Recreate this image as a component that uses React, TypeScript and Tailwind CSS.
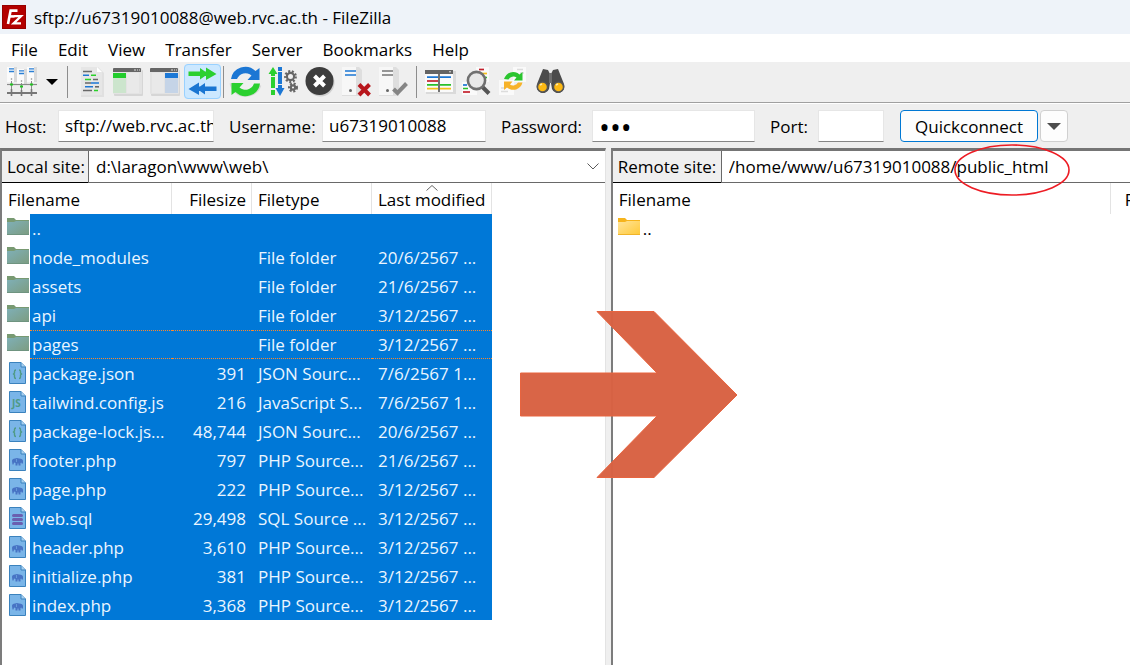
import type { ReactNode } from 'react'

type FileKind = 'folder' | 'json' | 'js' | 'php' | 'sql'

interface FileRow {
  name: string
  size: string
  type: string
  modified: string
  kind: FileKind
}

const menus = ['File', 'Edit', 'View', 'Transfer', 'Server', 'Bookmarks', 'Help']

const files: FileRow[] = [
  { name: '..', size: '', type: '', modified: '', kind: 'folder' },
  { name: 'node_modules', size: '', type: 'File folder', modified: '20/6/2567 ...', kind: 'folder' },
  { name: 'assets', size: '', type: 'File folder', modified: '21/6/2567 ...', kind: 'folder' },
  { name: 'api', size: '', type: 'File folder', modified: '3/12/2567 ...', kind: 'folder' },
  { name: 'pages', size: '', type: 'File folder', modified: '3/12/2567 ...', kind: 'folder' },
  { name: 'package.json', size: '391', type: 'JSON Sourc...', modified: '7/6/2567 1...', kind: 'json' },
  { name: 'tailwind.config.js', size: '216', type: 'JavaScript S...', modified: '7/6/2567 1...', kind: 'js' },
  { name: 'package-lock.js...', size: '48,744', type: 'JSON Sourc...', modified: '20/6/2567 ...', kind: 'json' },
  { name: 'footer.php', size: '797', type: 'PHP Source...', modified: '21/6/2567 ...', kind: 'php' },
  { name: 'page.php', size: '222', type: 'PHP Source...', modified: '3/12/2567 ...', kind: 'php' },
  { name: 'web.sql', size: '29,498', type: 'SQL Source ...', modified: '3/12/2567 ...', kind: 'sql' },
  { name: 'header.php', size: '3,610', type: 'PHP Source...', modified: '3/12/2567 ...', kind: 'php' },
  { name: 'initialize.php', size: '381', type: 'PHP Source...', modified: '3/12/2567 ...', kind: 'php' },
  { name: 'index.php', size: '3,368', type: 'PHP Source...', modified: '3/12/2567 ...', kind: 'php' },
]

const focusedFile = 'pages'

function Logo() {
  return (
    <svg width="24" height="24" viewBox="0 0 24 24" className="shrink-0">
      <rect width="24" height="24" fill="#b30000" />
      <rect x="0.5" y="0.5" width="23" height="23" fill="none" stroke="#7a0000" strokeDasharray="1 1" />
      <g fill="none" stroke="#fff" strokeWidth="2.6">
        <path d="M6 19 L8.6 5.6 H15.5" />
        <path d="M7 11.4 H12.5" />
        <path d="M12 11.2 H19 L11.6 18.4 H19" strokeWidth="2.3" />
      </g>
    </svg>
  )
}

function Icon({ children }: { children: ReactNode }) {
  return (
    <svg width="33" height="33" viewBox="0 0 33 33" className="shrink-0">
      {children}
    </svg>
  )
}

function SiteManagerIcon() {
  return (
    <Icon>
      {[1, 11, 21].map((x, i) => (
        <g key={x} transform={`translate(${x} ${i === 1 ? 4 : 2})`}>
          <rect width="8" height="15" fill="#fbfbfb" />
          <rect x="7" width="3" height="15" fill="#dadada" />
          <path d="M2 1.8 H7 M2 4.5 H7" stroke="#2b7fd4" strokeWidth="1.3" />
          <circle cx="4.5" cy="12" r="0.8" fill="#888" />
        </g>
      ))}
      <path d="M1 19.5 H31" stroke="#8a8a8a" strokeWidth="1.2" />
      <path d="M5.5 16 V24 M15.5 18 V26 M25.5 16 V24" stroke="#8a8a8a" />
      <path d="M4 19.5 H7 M14 21.5 H17 M24 19.5 H27" stroke="#22c322" strokeWidth="2.2" />
      <path d="M1 28 H31" stroke="#777" strokeWidth="2" />
      <path d="M5.5 24 V31 M15.5 25 V31 M25.5 24 V31" stroke="#777" strokeWidth="1.6" />
    </Icon>
  )
}

function LogIcon() {
  return (
    <Icon>
      <path d="M6 2 H23 L29 8 V32 H6 Z" fill="#e0e0e0" />
      <path d="M6 2 H22 L27 7 V30 H6 Z" fill="#e6e6e6" />
      <path d="M22 2 V7 H27 Z" fill="#fff" />
      <g strokeWidth="1.6">
        <path d="M8 6.5 H17 M18 14.5 H23 M10 18 H16 M8 25.5 H17" stroke="#686868" />
        <path d="M8 10.2 H14 M16 18 H24 M10 21.8 H18" stroke="#1c77d4" />
        <path d="M16 10.2 H21 M10 14.5 H16 M19 25.5 H23" stroke="#2ad12a" />
        <path d="M20 21.8 H24" stroke="#686868" />
      </g>
    </Icon>
  )
}

function LocalTreeIcon() {
  return (
    <Icon>
      <rect x="2" y="5" width="29" height="26" rx="1" fill="#d6d6d6" />
      <rect x="1" y="3" width="29" height="26" rx="1" fill="#e3e3e3" />
      <path d="M1 7 V4 Q1 3 2 3 H28 Q29 3 29 4 V7 Z" fill="#666" />
      <path d="M22 5 H24 M25 5 H26 M27 5 H28" stroke="#ddd" />
      <rect x="1" y="8" width="13" height="5" fill="#22cc2c" />
      <rect x="1" y="13" width="13" height="15" fill="#cce5cd" />
      <rect x="15" y="8" width="12" height="20" fill="#e9e9e9" />
    </Icon>
  )
}

function RemoteTreeIcon() {
  return (
    <Icon>
      <rect x="2" y="5" width="29" height="26" rx="1" fill="#d6d6d6" />
      <rect x="1" y="3" width="29" height="26" rx="1" fill="#e3e3e3" />
      <path d="M1 7 V4 Q1 3 2 3 H28 Q29 3 29 4 V7 Z" fill="#666" />
      <path d="M22 5 H24 M25 5 H26 M27 5 H28" stroke="#ddd" />
      <rect x="3" y="8" width="12" height="20" fill="#e9e9e9" />
      <rect x="16" y="8" width="13" height="5" fill="#1c78d6" />
      <rect x="16" y="13" width="13" height="15" fill="#c5d4e7" />
    </Icon>
  )
}

function QueueIcon() {
  return (
    <Icon>
      <path d="M2.5 6.5 H14 V3 L19 6.5 H20 V2.5 L30.5 9 L20 15 V11 H19 L14 14.5 V11 H2.5 Z" fill="#2bd02f" />
      <path d="M30.5 21.5 H19 V18 L14 21.5 H13 V17.5 L2.5 24 L13 30 V26 H14 L19 29.5 V26 H30.5 Z" fill="#1b76d2" />
    </Icon>
  )
}

function RefreshIcon() {
  return (
    <Icon>
      <path d="M3 18 A 14 14 0 0 0 30 20" fill="none" stroke="#d8d8d8" strokeWidth="5" />
      <path d="M2 14 A 14.5 14.5 0 0 1 26.5 6 L30.5 3 V15 H18.5 L22.5 10.5 A 9 9 0 0 0 8 14 Z" fill="#1c77d4" />
      <path d="M31 18.5 A 14.5 14.5 0 0 1 6.5 27 L2.5 30 V18 H14.5 L10.5 22.5 A 9 9 0 0 0 25 18.5 Z" fill="#2bd02f" />
    </Icon>
  )
}

function Gear({ x, y, r }: { x: number; y: number; r: number }) {
  return (
    <g transform={`translate(${x} ${y})`}>
      <circle r={r} fill="none" stroke="#666" strokeWidth="2.4" strokeDasharray="2 1.6" />
      <circle r={r - 1.6} fill="none" stroke="#666" strokeWidth="2.2" />
    </g>
  )
}

function FilterIcon() {
  return (
    <Icon>
      <path d="M5 30 V25 H9 V30 Z M5 23 V9 H2.5 L7 2 L11.5 9 H9 V23 Z" fill="#2bd02f" />
      <path d="M5 11.5 H9" stroke="#efefef" />
      <path d="M12 2 H16 V23 H18.5 L14 31 L9.5 23 H12 Z" fill="#1c77d4" />
      <path d="M12 6.5 H16 M12 19.5 H16" stroke="#efefef" />
      <Gear x={24.5} y={11.5} r={5.2} />
      <Gear x={27} y={22.5} r={3.8} />
    </Icon>
  )
}

function CancelIcon() {
  return (
    <Icon>
      <circle cx="17.5" cy="17.5" r="14" fill="#cfcfcf" />
      <circle cx="16.5" cy="16" r="14" fill="#3d3d3d" />
      <path d="M11.5 11 L21.5 21 M21.5 11 L11.5 21" stroke="#fff" strokeWidth="4" />
    </Icon>
  )
}

function Server({ color }: { color: string }) {
  return (
    <>
      <path d="M2 2 H19 L22 5 V31 H2 Z" fill="#dedede" />
      <rect x="2" y="2" width="14" height="28" fill="#f7f7f7" />
      <path d="M5 6 H16 M5 10 H16" stroke={color} strokeWidth="1.7" />
      <circle cx="10.5" cy="25.5" r="1.5" fill="#666" />
    </>
  )
}

function DisconnectIcon() {
  return (
    <Icon>
      <Server color="#1c77d4" />
      <path d="M19 19.5 L29.5 30 M29.5 19.5 L19 30" stroke="#b8161c" strokeWidth="4" />
    </Icon>
  )
}

function ReconnectIcon() {
  return (
    <Icon>
      <Server color="#777" />
      <path d="M16.5 24 L20.5 28 L29.5 18.5" fill="none" stroke="#858585" strokeWidth="4" />
    </Icon>
  )
}

function CompareIcon() {
  return (
    <Icon>
      <rect x="3" y="6" width="30" height="23" fill="#dadada" />
      <rect x="2" y="5" width="28" height="22" fill="#fafafa" />
      <rect x="2" y="5" width="28" height="4" fill="#646464" />
      <path d="M26 6.8 H28" stroke="#ddd" />
      <g strokeWidth="1.7">
        <path d="M4 12.2 H15 M17 12.2 H28" stroke="#1c77d4" />
        <path d="M4 16 H15" stroke="#c3202c" />
        <path d="M4 19.8 H15 M17 19.8 H28" stroke="#2ac02a" />
        <path d="M4 23.6 H15 M17 23.6 H28" stroke="#f5c01d" />
      </g>
      <path d="M16 8 V27" stroke="#646464" strokeWidth="1.8" />
    </Icon>
  )
}

function SearchIcon() {
  return (
    <Icon>
      <rect x="16" y="2" width="13" height="15" fill="#fafafa" />
      <rect x="2" y="17" width="15" height="13" fill="#fafafa" />
      <g strokeWidth="1.7">
        <path d="M19 4.5 H24" stroke="#c3202c" />
        <path d="M21 8.5 H27" stroke="#f5c01d" />
        <path d="M23 12.5 H27 M3 23.5 H8" stroke="#2ac02a" />
        <path d="M3 20 H7" stroke="#1c77d4" />
        <path d="M3 27 H10" stroke="#c3202c" />
      </g>
      <path d="M22 21.5 L29 28.5" stroke="#555" strokeWidth="4" />
      <circle cx="16.5" cy="15.5" r="8.6" fill="#e8e8e8" stroke="#707070" strokeWidth="2.6" />
    </Icon>
  )
}

function SyncIcon() {
  return (
    <Icon>
      <rect x="16" y="2" width="13" height="15" fill="#fafafa" />
      <rect x="2" y="15" width="15" height="15" fill="#fafafa" />
      <path d="M20 4.5 H26 M23 8 H27 M4 23 H9 M4 26.5 H11" stroke="#dcdcdc" strokeWidth="1.4" />
      <path d="M7 14 A 9.5 9.5 0 0 1 22.5 9.5 L25.5 7 V15.5 H17 L19.5 12.5 A 5.5 5.5 0 0 0 11.5 14.5 Z" fill="#2bc52f" />
      <path d="M25.5 17.5 A 9.5 9.5 0 0 1 10 22.5 L7 25 V16.5 H15.5 L13 19.5 A 5.5 5.5 0 0 0 21 17.5 Z" fill="#f7b32a" />
    </Icon>
  )
}

function BinocularsIcon() {
  return (
    <Icon>
      <path d="M9 4 L14 5 L15.5 8 H17.5 L19 5 L24 4 L30 19 A6 6 0 0 1 18 24 L17 18 H16 L15 24 A6 6 0 0 1 3 19 Z" fill="#4c4c4c" />
      <path d="M15 8 V18 H18 V8" fill="#6e6e6e" />
      <circle cx="8.5" cy="22" r="5.8" fill="#555" />
      <circle cx="24.5" cy="22" r="5.8" fill="#555" />
      <circle cx="8.5" cy="22" r="4.3" fill="#fdb913" />
      <circle cx="24.5" cy="22" r="4.3" fill="#fdb913" />
      <path d="M6 20 L8 19 M22 20 L24 19" stroke="#ffe9a8" strokeWidth="1.5" />
    </Icon>
  )
}

function ToolButton({ label, active, children }: { label: string; active?: boolean; children: ReactNode }) {
  return (
    <button
      type="button"
      aria-label={label}
      className={
        active
          ? 'flex h-[35px] w-[37px] items-center justify-center rounded-sm bg-[#cce8ff] outline outline-1 -outline-offset-1 outline-[#99d1ff]'
          : 'flex h-[35px] w-[37px] items-center justify-center rounded-sm'
      }
    >
      {children}
    </button>
  )
}

function Divider() {
  return <div className="h-8 w-px bg-[#8d8d8d]" />
}

function Toolbar() {
  return (
    <div className="flex h-[41px] items-center border-b border-[#a0a0a0] bg-[#efefef] pb-px pl-1">
      <ToolButton label="Site Manager"><SiteManagerIcon /></ToolButton>
      <button type="button" aria-label="Open site list" className="flex h-[35px] w-[22px] items-center justify-center">
        <svg width="12" height="6" viewBox="0 0 12 6">
          <path d="M0 0 H12 L6 6 Z" fill="#000" />
        </svg>
      </button>
      <div className="flex w-[10px] pl-1"><Divider /></div>
      <ToolButton label="Message log"><LogIcon /></ToolButton>
      <ToolButton label="Local tree"><LocalTreeIcon /></ToolButton>
      <ToolButton label="Remote tree"><RemoteTreeIcon /></ToolButton>
      <ToolButton label="Transfer queue" active><QueueIcon /></ToolButton>
      <div className="flex w-[6px] pl-0.5"><Divider /></div>
      <ToolButton label="Refresh"><RefreshIcon /></ToolButton>
      <ToolButton label="Process queue"><FilterIcon /></ToolButton>
      <ToolButton label="Cancel"><CancelIcon /></ToolButton>
      <ToolButton label="Disconnect"><DisconnectIcon /></ToolButton>
      <ToolButton label="Reconnect"><ReconnectIcon /></ToolButton>
      <div className="flex w-[9px] pl-1"><Divider /></div>
      <ToolButton label="Directory comparison"><CompareIcon /></ToolButton>
      <ToolButton label="Filename filters"><SearchIcon /></ToolButton>
      <ToolButton label="Synchronized browsing"><SyncIcon /></ToolButton>
      <ToolButton label="Find files"><BinocularsIcon /></ToolButton>
    </div>
  )
}

const fieldClass =
  'h-8 border border-[#e6e6e6] border-b-[#868686] bg-white pl-1.5 outline-none'

function QuickconnectBar() {
  return (
    <form className="flex h-[45px] items-center border-t border-white bg-[#efefef] pl-[5px]">
      <label htmlFor="host" className="w-[53px] pt-0.5">Host:</label>
      <input id="host" defaultValue="sftp://web.rvc.ac.th" className={`${fieldClass} mr-[15px] w-[156px] pb-0.5`} />
      <label htmlFor="user" className="w-[93px] pt-0.5">Username:</label>
      <input id="user" defaultValue="u67319010088" className={`${fieldClass} mr-[15px] w-[164px] pb-0.5`} />
      <label htmlFor="pass" className="w-[91px] pt-0.5">Password:</label>
      <input id="pass" type="password" defaultValue="abc" className={`${fieldClass} mr-[15px] w-[163px] text-[29px]`} />
      <label htmlFor="port" className="w-12 pt-0.5">Port:</label>
      <input id="port" className={`${fieldClass} mr-4 w-[66px]`} />
      <button type="button" className="h-8 w-[138px] rounded border border-[#0078d4] bg-[#fdfdfd] pt-0.5">
        Quickconnect
      </button>
      <button
        type="button"
        aria-label="Connection history"
        className="ml-0.5 flex h-8 w-7 items-center justify-center rounded border border-[#d0d0d0] bg-[#fdfdfd]"
      >
        <svg width="14" height="7" viewBox="0 0 14 7">
          <path d="M0 0 H14 L7 7 Z" fill="#4d4d4d" />
        </svg>
      </button>
    </form>
  )
}

function FolderIcon({ selected }: { selected?: boolean }) {
  return (
    <svg width="22" height="17" viewBox="0 0 22 17" className="mt-px">
      <defs>
        <linearGradient id="folder-selected" x1="0" y1="0" x2="1" y2="1">
          <stop offset="0" stopColor="#7fb0b8" />
          <stop offset="1" stopColor="#7c9c80" />
        </linearGradient>
        <linearGradient id="folder-plain" x1="0" y1="0" x2="1" y2="1">
          <stop offset="0" stopColor="#ffe49a" />
          <stop offset="1" stopColor="#ffc937" />
        </linearGradient>
      </defs>
      <path d="M0 0 H7 L9 2 H22 V6 H0 Z" fill={selected ? '#789a72' : '#f6b41c'} />
      <path d="M0 4 H7 L9 3 H22 V17 H0 Z" fill={selected ? 'url(#folder-selected)' : 'url(#folder-plain)'} />
      <path d="M0 16.5 H22" stroke={selected ? '#6f9480' : '#f0b429'} />
    </svg>
  )
}

function FileIcon({ kind }: { kind: FileKind }) {
  if (kind === 'folder') return <FolderIcon selected />
  return (
    <svg width="17" height="22" viewBox="0 0 17 22" className="ml-0.5">
      <path d="M0.5 0.5 H12 L16.5 5 V21.5 H0.5 Z" fill="#7ab5e8" stroke="#3b82bd" />
      <path d="M12 0.5 V5 H16.5" fill="#a8d0f0" stroke="#3b82bd" />
      {kind === 'json' && (
        <path
          d="M7 8 Q5.5 8 5.5 9.5 V11 L4.5 12 L5.5 13 V15 Q5.5 16.5 7 16.5 M10 8 Q11.5 8 11.5 9.5 V11 L12.5 12 L11.5 13 V15 Q11.5 16.5 10 16.5"
          fill="none"
          stroke="#4f9a85"
          strokeWidth="1.4"
        />
      )}
      {kind === 'js' && (
        <text x="3" y="16" fontSize="10" fontWeight="700" fill="#4f9a85">JS</text>
      )}
      {kind === 'php' && (
        <>
          <path d="M3 12 Q3 9.5 6 9.5 Q8 8.5 10 9.5 Q14 9.5 14 12 V14.5 H12.5 V13.5 L11.5 14 V16.5 H9.5 V14.5 H8.5 V16.5 H6.5 V14 L5 13.5 L4.5 15.5 H3.5 Z" fill="#4773c4" />
          <path d="M7.5 10 V13" stroke="#7ab5e8" strokeWidth="0.6" />
        </>
      )}
      {kind === 'sql' && (
        <g fill="#6a5fb0">
          <rect x="3" y="7" width="11" height="3" rx="1.5" />
          <rect x="3" y="11" width="11" height="3" rx="1.5" />
          <rect x="3" y="15" width="11" height="3" rx="1.5" />
        </g>
      )}
    </svg>
  )
}

function LocalPane() {
  return (
    <section className="mr-[5px] flex min-w-0 flex-col border-t-3 border-r border-l-2 border-t-[#757575] border-r-[#e3e3e3] border-l-[#7c7c7c] bg-white">
      <div className="flex h-8 shrink-0">
        <label htmlFor="local-site" className="w-[86px] border-b border-black bg-[#efefef] pl-[5px] leading-[31px] whitespace-nowrap">
          Local site:
        </label>
        <div className="relative flex-1">
          <select id="local-site" className="h-8 w-full appearance-none border-b border-l border-[#696969] bg-white pl-[7px] outline-none">
            <option>d:\laragon\www\web\</option>
          </select>
          <svg width="12" height="7" viewBox="0 0 12 7" className="pointer-events-none absolute top-3 right-1.5">
            <path d="M0.5 0.5 L6 6 L11.5 0.5" fill="none" stroke="#5a5a5a" />
          </svg>
        </div>
      </div>
      <table className="w-[490px] table-fixed border-collapse whitespace-nowrap">
        <colgroup>
          <col className="w-[170px]" />
          <col className="w-20" />
          <col className="w-[120px]" />
          <col className="w-[120px]" />
        </colgroup>
        <thead>
          <tr className="h-[31px] text-left">
            <th className="p-0 font-normal"><div className="h-[31px] border-r border-[#e3e3e3] pl-1.5 leading-[33px]">Filename</div></th>
            <th className="p-0 font-normal"><div className="h-[31px] border-r border-[#e3e3e3] pr-[5px] text-right leading-[33px]">Filesize</div></th>
            <th className="p-0 font-normal"><div className="h-[31px] border-r border-[#e3e3e3] pl-1.5 leading-[33px]">Filetype</div></th>
            <th className="p-0 font-normal">
              <div className="relative h-[31px] border-r border-[#e3e3e3] pl-1.5 leading-[33px]">
                Last modified
                <svg width="12" height="6" viewBox="0 0 12 6" className="absolute top-0.5 left-[54px]">
                  <path d="M0.5 5.5 L6 0.5 L11.5 5.5" fill="none" stroke="#666" />
                </svg>
              </div>
            </th>
          </tr>
        </thead>
        <tbody className="text-[#eaf5ff]">
          {files.map((file) => {
            const focus = file.name === focusedFile ? 'border-y border-dotted border-[#ff8728]' : 'border-y border-transparent'
            return (
              <tr key={file.name} className="h-[29px]">
                <td className="p-0">
                  <div className="flex h-[29px]">
                    <div className="w-7 shrink-0 pt-[3px] pl-[5px]"><FileIcon kind={file.kind} /></div>
                    <div className={`flex-1 bg-[#0078d7] pl-0.5 leading-[28px] ${focus}`}>{file.name}</div>
                  </div>
                </td>
                <td className="p-0"><div className={`h-[29px] bg-[#0078d7] pr-1.5 text-right leading-[28px] ${focus}`}>{file.size}</div></td>
                <td className="p-0"><div className={`h-[29px] bg-[#0078d7] pl-1.5 leading-[28px] ${focus}`}>{file.type}</div></td>
                <td className="p-0"><div className={`h-[29px] bg-[#0078d7] pl-1.5 leading-[28px] ${focus}`}>{file.modified}</div></td>
              </tr>
            )
          })}
        </tbody>
      </table>
    </section>
  )
}

function RemotePane() {
  return (
    <section className="flex min-w-0 flex-col overflow-hidden border-t-3 border-l-2 border-t-[#757575] border-l-[#7c7c7c] bg-white">
      <div className="flex h-8 shrink-0">
        <label htmlFor="remote-site" className="w-[108px] shrink-0 border-b border-black bg-[#efefef] pl-[5px] leading-[31px] whitespace-nowrap">
          Remote site:
        </label>
        <select id="remote-site" className="h-8 flex-1 appearance-none border-b border-l border-[#696969] bg-white pl-[7px] outline-none">
          <option>/home/www/u67319010088/public_html</option>
        </select>
      </div>
      <table className="w-[640px] table-fixed border-collapse whitespace-nowrap">
        <colgroup>
          <col className="w-[498px]" />
          <col />
        </colgroup>
        <thead>
          <tr className="h-[31px] text-left">
            <th className="p-0 font-normal"><div className="h-[31px] border-r border-[#e3e3e3] pl-1.5 leading-[33px]">Filename</div></th>
            <th className="p-0 font-normal"><div className="h-[31px] pl-3.5 leading-[33px]">Filesize</div></th>
          </tr>
        </thead>
        <tbody>
          <tr className="h-[29px]">
            <td className="p-0">
              <div className="flex h-[29px]">
                <div className="w-7 shrink-0 pt-[3px] pl-[5px]"><FolderIcon /></div>
                <div className="pl-0.5 leading-[30px]">..</div>
              </div>
            </td>
            <td className="p-0" />
          </tr>
        </tbody>
      </table>
    </section>
  )
}

export default function App() {
  return (
    <div className="flex min-h-screen flex-col bg-[#efefef] font-['Open_Sans','Noto_Sans',sans-serif] text-[17px] leading-6 text-black">
      <header className="flex h-[34px] items-center gap-2 bg-[#eef3f9] pl-0.5">
        <Logo />
        <h1 className="pt-0.5">sftp://u67319010088@web.rvc.ac.th - FileZilla</h1>
      </header>
      <nav className="flex h-7 items-center bg-white pl-px">
        {menus.map((menu) => (
          <button key={menu} type="button" className="px-2.5 pt-1">{menu}</button>
        ))}
      </nav>
      <Toolbar />
      <QuickconnectBar />
      <main className="relative grid flex-1 grid-cols-[20fr_17fr] overflow-hidden">
        <LocalPane />
        <RemotePane />
      </main>
      {/* Annotations drawn over the window */}
      <svg width="116" height="52" viewBox="0 0 116 52" className="pointer-events-none absolute top-[144px] left-[954px]">
        <ellipse cx="58" cy="26" rx="57" ry="25" fill="none" stroke="#ed1c24" strokeWidth="1.6" />
      </svg>
      <svg width="218" height="168" viewBox="0 0 218 168" className="pointer-events-none absolute top-[311px] left-[520px]">
        <path
          d="M0.5 62 H137 L77 0.5 H134 L217 84 L134 166.5 H77 L137 105 H0.5 Z"
          fill="#d86243"
          fillOpacity="0.98"
          stroke="#e8643f"
        />
      </svg>
    </div>
  )
}
